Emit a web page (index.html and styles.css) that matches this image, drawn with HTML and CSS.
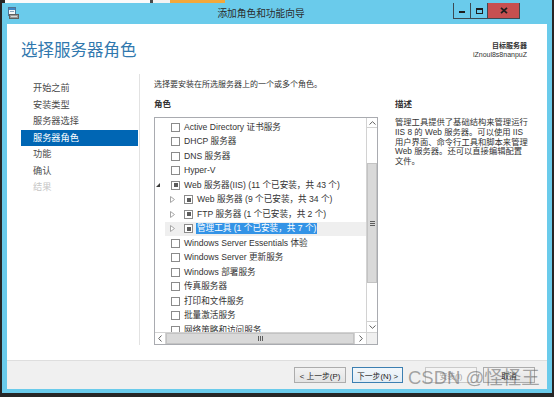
FILE: index.html
```html
<!DOCTYPE html>
<html lang="zh-CN">
<head>
<meta charset="utf-8">
<title>添加角色和功能向导</title>
<link rel="stylesheet" href="styles.css">
</head>
<body>
<div class="strip">
  <span class="s-dark"></span><span class="s-white"></span><span class="s-gap"></span><span class="s-white2"></span><span class="s-orange"></span><span class="s-blue"></span><span class="s-end"></span>
</div>
<div class="window">
  <div class="titlebar">
    <svg class="appicon" viewBox="0 0 12 12" width="12" height="12">
      <rect x="1.5" y="0.5" width="7" height="8" fill="#f4f7fa" stroke="#4f7393"/>
      <rect x="2" y="1" width="6" height="2" fill="#3d86c6"/>
      <rect x="3" y="4" width="4" height="1" fill="#8aa4bb"/>
      <rect x="2.5" y="7.5" width="9" height="4" fill="#9a9a9a" stroke="#5f5f5f"/>
      <rect x="4" y="9" width="6" height="1" fill="#d8d8d8"/>
    </svg>
    <div class="title">添加角色和功能向导</div>
    <div class="caption">
      <span class="cbtn min"><i></i></span>
      <span class="cbtn max"><i></i></span>
      <span class="cbtn close"><svg viewBox="0 0 8 7" width="8" height="7"><path d="M1 0.8 L7 6.2 M7 0.8 L1 6.2" stroke="#1e1e1e" stroke-width="1.8"/></svg></span>
    </div>
  </div>
  <div class="client">
    <header class="header">
      <h1>选择服务器角色</h1>
      <div class="target"><b>目标服务器</b><span>iZnoul8s8nanpuZ</span></div>
    </header>
    <div class="body">
      <nav class="nav">
        <div class="nav-item">开始之前</div>
        <div class="nav-item">安装类型</div>
        <div class="nav-item">服务器选择</div>
        <div class="nav-item active">服务器角色</div>
        <div class="nav-item">功能</div>
        <div class="nav-item">确认</div>
        <div class="nav-item disabled">结果</div>
      </nav>
      <main class="main">
        <p class="intro">选择要安装在所选服务器上的一个或多个角色。</p>
        <div class="cols">
          <section class="roles">
            <h2>角色</h2>
            <div class="tree">
              <div class="tree-view">
                <div class="row"><span class="exp"></span><span class="cb"></span><span class="label">Active Directory 证书服务</span></div>
                <div class="row"><span class="exp"></span><span class="cb"></span><span class="label">DHCP 服务器</span></div>
                <div class="row"><span class="exp"></span><span class="cb"></span><span class="label">DNS 服务器</span></div>
                <div class="row"><span class="exp"></span><span class="cb"></span><span class="label">Hyper-V</span></div>
                <div class="row"><span class="exp"><i class="tri-open"></i></span><span class="cb ind"></span><span class="label">Web 服务器(IIS) (11 个已安装，共 43 个)</span></div>
                <div class="row l1"><span class="exp"><svg class="tri-closed" viewBox="0 0 5 7" width="5" height="7"><path d="M0.5 0.5 L4.5 3.5 L0.5 6.5 Z" fill="#fff" stroke="#a6a6a6"/></svg></span><span class="cb ind"></span><span class="label">Web 服务器 (9 个已安装，共 34 个)</span></div>
                <div class="row l1"><span class="exp"><svg class="tri-closed" viewBox="0 0 5 7" width="5" height="7"><path d="M0.5 0.5 L4.5 3.5 L0.5 6.5 Z" fill="#fff" stroke="#a6a6a6"/></svg></span><span class="cb ind"></span><span class="label">FTP 服务器 (1 个已安装，共 2 个)</span></div>
                <div class="row l1 current"><span class="exp"><svg class="tri-closed" viewBox="0 0 5 7" width="5" height="7"><path d="M0.5 0.5 L4.5 3.5 L0.5 6.5 Z" fill="#fff" stroke="#a6a6a6"/></svg></span><span class="cb ind"></span><span class="label sel">管理工具 (1 个已安装，共 7 个)</span></div>
                <div class="row"><span class="exp"></span><span class="cb"></span><span class="label">Windows Server Essentials 体验</span></div>
                <div class="row"><span class="exp"></span><span class="cb"></span><span class="label">Windows Server 更新服务</span></div>
                <div class="row"><span class="exp"></span><span class="cb"></span><span class="label">Windows 部署服务</span></div>
                <div class="row"><span class="exp"></span><span class="cb"></span><span class="label">传真服务器</span></div>
                <div class="row"><span class="exp"></span><span class="cb"></span><span class="label">打印和文件服务</span></div>
                <div class="row"><span class="exp"></span><span class="cb"></span><span class="label">批量激活服务</span></div>
                <div class="row"><span class="exp"></span><span class="cb"></span><span class="label">网络策略和访问服务</span></div>
              </div>
              <div class="vscroll">
                <span class="sb-btn up"><svg viewBox="0 0 7 4" width="7" height="4"><path d="M0.5 3.5 L3.5 0.7 L6.5 3.5" fill="none" stroke="#606060"/></svg></span>
                <span class="track t1"></span>
                <span class="thumb v"><i></i><i></i><i></i></span>
                <span class="track t2"></span>
                <span class="sb-btn down"><svg viewBox="0 0 7 4" width="7" height="4"><path d="M0.5 0.5 L3.5 3.3 L6.5 0.5" fill="none" stroke="#606060"/></svg></span>
              </div>
              <div class="hscroll">
                <span class="sb-btn left"><svg viewBox="0 0 4 7" width="4" height="7"><path d="M3.5 0.5 L0.7 3.5 L3.5 6.5" fill="none" stroke="#606060"/></svg></span>
                <span class="thumb h"><i></i><i></i><i></i></span>
                <span class="sb-btn right"><svg viewBox="0 0 4 7" width="4" height="7"><path d="M0.5 0.5 L3.3 3.5 L0.5 6.5" fill="none" stroke="#606060"/></svg></span>
              </div>
              <div class="corner"></div>
            </div>
          </section>
          <section class="desc">
            <h2>描述</h2>
            <p>管理工具提供了基础结构来管理运行<br>IIS 8 的 Web 服务器。可以使用 IIS<br>用户界面、命令行工具和脚本来管理<br>Web 服务器。还可以直接编辑配置<br>文件。</p>
          </section>
        </div>
      </main>
    </div>
    <footer class="footer">
      <button class="btn">&lt; 上一步(P)</button>
      <button class="btn focus">下一步(N) &gt;</button>
      <button class="btn off wide-gap">安装(I)</button>
      <button class="btn">取消</button>
    </footer>
  </div>
</div>
<div class="watermark">CSDN @怪怪王</div>
</body>
</html>
```

FILE: styles.css
```css
* { box-sizing: border-box; margin: 0; padding: 0; }
html, body { width: 554px; height: 397px; overflow: hidden; }
body {
  background: #262626;
  font-family: "Liberation Sans", "Noto Sans CJK SC", sans-serif;
  color: #333;
  position: relative;
}

/* strip of the screen above the window */
.strip { display: flex; height: 3px; }
.strip span { display: block; height: 3px; }
.s-dark { width: 5px; }
.s-white { width: 145px; background: #fafafa; }
.s-gap { width: 3px; background: #4a4a4a; }
.s-white2 { width: 17px; background: #f2f2f2; }
.s-orange { width: 55px; background: #f3a83b; }
.s-blue { flex: 1; background: #6acbeb; }
.s-end { width: 2px; }

/* window frame */
.window {
  margin-left: 2px;
  width: 550px;
  height: 390px;
  background: #6acbeb;
  display: flex;
  flex-direction: column;
}
.titlebar {
  height: 21px;
  flex: none;
  display: flex;
  align-items: flex-start;
  padding-left: 5px;
  padding-right: 32px;
}
.appicon { flex: none; margin-top: 4px; }
.title {
  flex: 1;
  text-align: center;
  padding-left: 50px;
  font-size: 9.7px;
  line-height: 21px;
  color: #2b2b2b;
}
.caption { display: flex; border-left: 1px solid #3c4a52; }
.cbtn {
  height: 16px;
  border-right: 1px solid #3c4a52;
  border-bottom: 1px solid #3c4a52;
  display: flex;
  align-items: center;
  justify-content: center;
}
.min, .max { width: 17px; }
.min i { display: block; width: 6px; height: 2px; background: #1e1e1e; margin-top: 3px; }
.max i { display: block; width: 7px; height: 6px; border: 1px solid #1e1e1e; border-top-width: 2px; }
.close { width: 32px; background: #c75050; }

.client {
  margin: 0 5px;
  height: 365px;
  background: #fff;
  display: flex;
  flex-direction: column;
}

/* header */
.header { height: 50px; flex: none; display: flex; justify-content: space-between; }
.header h1 {
  padding: 16px 0 0 14px;
  font-size: 16.5px;
  line-height: 20px;
  font-weight: normal;
  color: #3178ae;
}
.target {
  padding: 17px 20px 0 0;
  display: flex;
  flex-direction: column;
  align-items: flex-end;
  font-size: 7px;
  line-height: 9px;
  color: #333;
}

/* body */
.body { flex: 1; display: flex; min-height: 0; }
.nav {
  width: 133px;
  flex: none;
  padding: 6px 0 0 14px;
  margin-bottom: 15px;
  border-right: 1px solid #e2e2e2;
}
.nav-item {
  width: 117px;
  height: 16.5px;
  line-height: 16.5px;
  padding-left: 12px;
  font-size: 9.2px;
  color: #4a4a4a;
}
.nav-item.active { background: #0066b4; color: #fff; }
.nav-item.disabled { color: #c6c6c6; }

.main { flex: 1; padding: 5px 0 0 14px; }
.intro { font-size: 8px; line-height: 12px; color: #333; }
.cols { display: flex; margin-top: 7px; }
h2 { font-size: 8.5px; line-height: 12px; font-weight: bold; color: #333; }
.roles { width: 224px; flex: none; }
.roles h2 { margin-bottom: 7px; }

.tree {
  height: 228px;
  border: 1px solid #a9abb0;
  display: grid;
  grid-template-columns: 1fr 11px;
  grid-template-rows: 1fr 12px;
}
.tree-view { overflow: hidden; padding-top: 2px; }
.row {
  display: flex;
  align-items: center;
  height: 14.5px;
  white-space: nowrap;
  font-size: 8.6px;
  color: #333;
}
.row.l1 { margin-left: 10px; padding-left: 3px; }
.row.current { background: #efefef; }
.exp { width: 16px; flex: none; display: flex; align-items: center; }
.tri-open {
  display: block;
  width: 0; height: 0;
  margin-left: 1px;
  border-left: 4px solid transparent;
  border-bottom: 4px solid #3a3a3a;
}
.tri-closed { display: block; margin-left: 2px; }
.cb {
  flex: none;
  width: 9px;
  height: 9px;
  border: 1px solid #8b8b8b;
  background: #fff;
  margin-right: 4px;
  display: flex;
  align-items: center;
  justify-content: center;
}
.cb.ind::after { content: ""; width: 4px; height: 4px; background: #5c5c5c; }
.label { line-height: 11px; }
.label.sel {
  background: #3393e6;
  color: #fff;
  padding: 0 1px;
  margin-left: -1px;
}

/* scrollbars */
.vscroll {
  display: flex;
  flex-direction: column;
  border-left: 1px solid #d2d2d2;
  background: #fff;
}
.sb-btn { display: flex; align-items: center; justify-content: center; flex: none; background: #fff; }
.sb-btn.up { height: 10px; border-bottom: 1px solid #d2d2d2; }
.sb-btn.down { height: 11px; border-top: 1px solid #d2d2d2; }
.track.t1 { height: 35px; flex: none; }
.track.t2 { flex: 1; }
.thumb {
  background: #d9d9d9;
  border: 1px solid #c3c3c3;
  display: flex;
  align-items: center;
  justify-content: center;
}
.thumb.v { height: 120px; flex: none; flex-direction: column; gap: 1px; }
.thumb.v i { display: block; width: 5px; height: 1px; background: #5e5e5e; }
.hscroll { display: flex; border-top: 1px solid #d2d2d2; background: #fff; }
.sb-btn.left { width: 11px; border-right: 1px solid #d2d2d2; }
.sb-btn.right { width: 12px; border-left: 1px solid #d2d2d2; }
.thumb.h { flex: 1; gap: 1px; }
.thumb.h i { display: block; width: 1px; height: 5px; background: #5e5e5e; }
.corner { background: #f0f0f0; border-top: 1px solid #d2d2d2; border-left: 1px solid #d2d2d2; }

/* description */
.desc { margin-left: 17px; }
.desc p { margin-top: 8px; font-size: 8.3px; line-height: 9.8px; color: #333; white-space: nowrap; }

/* footer */
.footer {
  height: 29px;
  flex: none;
  border-top: 1px solid #dedede;
  background: #f0f0f0;
  display: flex;
  justify-content: flex-end;
  align-items: flex-start;
  padding: 6px 12px 0 0;
  gap: 6px;
}
.btn {
  width: 52px;
  height: 16px;
  font-family: "Liberation Sans", "Noto Sans CJK SC", sans-serif;
  font-size: 7.8px;
  color: #222;
  background: linear-gradient(#f2f2f2, #e3e3e3);
  border: 1px solid #acacac;
}
.btn.focus { width: 51px; border-color: #3c7fb1; background: linear-gradient(#f2f7fb, #e2ecf5); }
.btn.off { color: #a3a3a3; border-color: #cacaca; background: #f4f4f4; }
.btn.wide-gap { margin-left: 16px; }

.watermark {
  position: absolute;
  left: 408px;
  top: 367px;
  font-size: 18.5px;
  line-height: 22px;
  color: rgba(95, 95, 95, 0.55);
  white-space: nowrap;
}
```
